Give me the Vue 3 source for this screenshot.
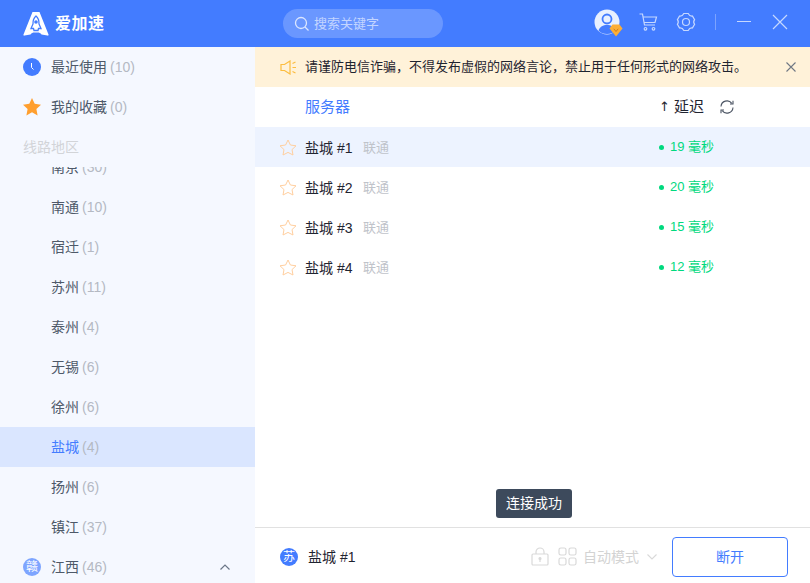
<script setup>
const cities = [
  { name: '南京', n: 30 }, { name: '南通', n: 10 }, { name: '宿迁', n: 1 }, { name: '苏州', n: 11 },
  { name: '泰州', n: 4 }, { name: '无锡', n: 6 }, { name: '徐州', n: 6 }, { name: '盐城', n: 4, on: true },
  { name: '扬州', n: 6 }, { name: '镇江', n: 37 }
]
const servers = [
  { id: 1, ms: 19, on: true }, { id: 2, ms: 20 }, { id: 3, ms: 15 }, { id: 4, ms: 12 }
]
</script>

<template>
  <div class="app">
    <header class="top">
      <div class="brand">
        <svg class="logo" width="26" height="25" viewBox="0 0 26 25">
          <path fill="#fff" d="M9.500 1H16.500L25.500 23.500C25.800 24.300 25.300 24.800 24.500 24.600L18.500 23.500C17.500 22 16 21.500 15 21.500H11C10 21.500 8.500 22 7.500 23.500L1.500 24.600C0.700 24.800 0.200 24.300 0.500 23.500Z"/>
          <path fill="none" stroke="#437cff" stroke-width="1.300" d="M13 5C15.300 7 16.200 10 16 13L18 17.500L15.500 17.500L15 19.500H11L10.500 17.500L8 17.500L10 13C9.800 10 10.700 7 13 5Z"/>
          <circle cx="13" cy="11" r="1.800" fill="#437cff"/>
        </svg>
        <span class="brand-name">爱加速</span>
      </div>
      <div class="search">
        <svg width="16" height="16" viewBox="0 0 16 16" fill="none" stroke="#dbe6ff" stroke-width="1.300">
          <circle cx="7" cy="7" r="5.500"/><path d="M11 11l3.500 3.500"/>
        </svg>
        <span>搜索关键字</span>
      </div>
      <div class="actions">
        <div class="avatar">
          <svg width="26" height="26" viewBox="0 0 26 26">
            <circle cx="13" cy="13" r="12.500" fill="#e8f0ff"/>
            <circle cx="13" cy="10" r="4.500" fill="#e8f0ff" stroke="#437cff" stroke-width="1.800"/>
            <path fill="#437cff" d="M4.500 21.500C6 17.500 9 16 13 16S20 17.500 21.500 21.500C19.500 24 16.500 25 13 25S6.500 24 4.500 21.500Z"/>
          </svg>
          <svg class="badge" width="14" height="13" viewBox="0 0 14 13">
            <path fill="#fcae37" d="M3.500 0.500H10.500L13.500 4.500L7 12.500L0.500 4.500Z"/>
            <path fill="none" stroke="#c9761a" stroke-width="0.900" d="M4.800 4.800L7 7.500L9.200 4.800"/>
          </svg>
        </div>
        <svg class="cart" width="20" height="20" viewBox="0 0 20 20" fill="none" stroke="#c6d8ff" stroke-width="1.200">
          <path d="M1.500 2H4.500L6.500 13H17"/><path d="M5 5H18.500L17 10.500H6"/>
          <circle cx="7.500" cy="16.800" r="1.300"/><circle cx="15.500" cy="16.800" r="1.300"/>
        </svg>
        <svg class="gear" width="20" height="20" viewBox="0 0 20 20" fill="none" stroke="#c6d8ff" stroke-width="1.200">
          <path d="M7.800 1.500H12.200C13 3.300 14.500 4.200 16.400 4L18.600 7.700C17.400 9.200 17.400 10.800 18.600 12.300L16.400 16C14.500 15.800 13 16.700 12.200 18.500H7.800C7 16.700 5.500 15.800 3.600 16L1.400 12.300C2.600 10.800 2.600 9.200 1.400 7.700L3.600 4C5.500 4.200 7 3.300 7.800 1.500Z"/>
          <circle cx="10" cy="10" r="3.500"/>
        </svg>
        <i class="divider"></i>
        <i class="minimize"></i>
        <svg class="close" width="16" height="16" viewBox="0 0 16 16" stroke="#c6d8ff" stroke-width="1.200">
          <path d="M1 1L15 15M15 1L1 15"/>
        </svg>
      </div>
    </header>

    <div class="body">
      <aside class="side">
        <div class="row">
          <svg class="ico" width="18" height="18" viewBox="0 0 18 18">
            <circle cx="9" cy="9" r="9" fill="#437cff"/>
            <path d="M8.500 5V9.500L10.500 11.500" stroke="#fff" stroke-width="1" fill="none"/>
          </svg>
          <span class="label">最近使用</span><span class="num">(10)</span>
        </div>
        <div class="row">
          <svg class="ico" width="18" height="18" viewBox="0 0 18 18">
            <path fill="#ff9f2f" d="M9 0L11.700 5.800L18 6.700L13.400 11L14.600 17.500L9 14.300L3.400 17.500L4.600 11L0 6.700L6.300 5.800Z"/>
          </svg>
          <span class="label">我的收藏</span><span class="num">(0)</span>
        </div>
        <div class="group">线路地区</div>
        <div class="scroll">
          <div class="list">
            <div v-for="c in cities" :key="c.name" class="row city" :class="{ on: c.on }">
              <span class="label">{{ c.name }}</span><span class="num">({{ c.n }})</span>
            </div>
            <div class="row">
              <span class="prov">赣</span>
              <span class="label">江西</span><span class="num">(46)</span>
              <svg class="up" width="10" height="6" viewBox="0 0 10 6" fill="none" stroke="#6b7688" stroke-width="1.200"><path d="M0.500 5.500L5 1L9.500 5.500"/></svg>
            </div>
          </div>
        </div>
      </aside>

      <main class="main">
        <div class="notice">
          <svg width="17" height="15" viewBox="0 0 17 15" fill="none" stroke="#fcbd3f" stroke-width="1.200">
            <path d="M1 4.500H4.500L10 1V14L4.500 10.500H1Z"/><path d="M12.500 3.500L15.500 2M12.500 7.500H16M12.500 11.500L15.500 13"/>
          </svg>
          <span class="notice-text">请谨防电信诈骗，不得发布虚假的网络言论，禁止用于任何形式的网络攻击。</span>
          <svg class="notice-x" width="10" height="10" viewBox="0 0 10 10" stroke="#6f7784" stroke-width="1.100"><path d="M0.500 0.500L9.500 9.500M9.500 0.500L0.500 9.500"/></svg>
        </div>
        <div class="thead">
          <span class="th-name">服务器</span>
          <span class="th-arrow">↑</span>
          <span class="th-delay">延迟</span>
          <svg width="16" height="16" viewBox="0 0 16 16" fill="none" stroke="#4a5362" stroke-width="1.100">
            <path d="M2 7.500A6 6 0 0 1 12.800 4.300"/><path d="M14 1.800V5H11"/>
            <path d="M14 8.500A6 6 0 0 1 3.200 11.700"/><path d="M2 14.200V11H5"/>
          </svg>
        </div>
        <div class="servers">
          <div v-for="s in servers" :key="s.id" class="server" :class="{ on: s.on }">
            <svg width="18" height="17" viewBox="0 0 18 17" fill="none" stroke="#ffcf9f" stroke-width="1">
              <path d="M9 1L11.400 6L17 6.800L13 10.600L14 16L9 13.400L4 16L5 10.600L1 6.800L6.600 6Z"/>
            </svg>
            <span class="s-name">盐城 #{{ s.id }}</span>
            <span class="s-isp">联通</span>
            <span class="dot"></span>
            <span class="s-ms">{{ s.ms }} 毫秒</span>
          </div>
        </div>
        <div class="toast-wrap"><div class="toast">连接成功</div></div>
        <footer class="foot">
          <span class="fico">苏</span>
          <span class="f-name">盐城 #1</span>
          <div class="f-right">
            <svg width="18" height="19" viewBox="0 0 18 19" fill="none" stroke="#d9d9d9" stroke-width="1.200">
              <rect x="1" y="7" width="16" height="11" rx="1"/><path d="M5 7V5A4 4 0 0 1 13 5V7"/>
              <circle cx="9" cy="11.500" r="1" fill="#d9d9d9"/><path d="M9 12V15"/>
            </svg>
            <svg class="grid" width="19" height="19" viewBox="0 0 19 19" fill="none" stroke="#d9d9d9" stroke-width="1.200">
              <rect x="1" y="1" width="7" height="7" rx="1.800"/><rect x="11" y="1" width="7" height="7" rx="1.800"/>
              <rect x="1" y="11" width="7" height="7" rx="1.800"/><rect x="11" y="11" width="7" height="7" rx="1.800"/>
            </svg>
            <span class="mode">自动模式</span>
            <svg class="chev" width="10" height="6" viewBox="0 0 10 6" fill="none" stroke="#d9d9d9" stroke-width="1.100"><path d="M0.500 0.500L5 5L9.500 0.500"/></svg>
            <button class="btn">断开</button>
          </div>
        </footer>
      </main>
    </div>
  </div>
</template>

<style scoped>
.app { width: 810px; height: 583px; overflow: hidden; display: flex; flex-direction: column; background: #fff; font-family: "Liberation Sans", "Noto Sans CJK SC", sans-serif; font-size: 14px; line-height: 20px; color: #1f2430; }
.top { height: 47px; flex: none; background: #437cff; display: flex; align-items: center; position: relative; }
.brand { width: 283px; flex: none; display: flex; align-items: center; padding-left: 23px; box-sizing: border-box; }
.brand-name { margin-left: 6px; color: #fff; font-size: 16px; font-weight: 700; letter-spacing: 0.500px; }
.search { width: 160px; height: 29px; border-radius: 15px; background: #6a97ff; display: flex; align-items: center; padding-left: 11px; box-sizing: border-box; color: #c3d5ff; font-size: 13px; gap: 4px; }
.actions { margin-left: auto; display: flex; align-items: center; padding-right: 22px; padding-bottom: 4px; }
.avatar { position: relative; width: 26px; height: 26px; }
.avatar svg { display: block; }
.badge { position: absolute; right: -3px; bottom: -2px; }
.cart { margin-left: 18px; }
.gear { margin-left: 18px; }
.divider { width: 1px; height: 16px; background: #7ca3ff; margin-left: 19px; }
.minimize { width: 14px; height: 1px; background: #c6d8ff; margin-left: 21px; }
.close { margin-left: 21px; }
.body { flex: 1; min-height: 0; display: flex; }
.side { width: 255px; flex: none; background: #f5f8ff; display: flex; flex-direction: column; overflow: hidden; }
.row { height: 40px; flex: none; display: flex; align-items: center; padding-left: 23px; color: #4e5969; position: relative; }
.ico { margin-right: 10px; }
.label { color: #4e5969; }
.num { color: #b4b9c3; margin-left: 3px; }
.group { height: 40px; flex: none; line-height: 40px; padding-left: 23px; box-sizing: border-box; color: #d2d4d8; }
.scroll { flex: 1; min-height: 0; overflow: hidden; }
.list { margin-top: -20px; }
.city { padding-left: 51px; }
.city.on { background: #dae6ff; }
.city.on .label { color: #437cff; }
.prov { width: 18px; height: 18px; border-radius: 50%; background: #7ea5ff; color: #fff; font-size: 12px; line-height: 18px; text-align: center; margin-right: 10px; }
.up { position: absolute; left: 220px; top: 17px; }
.main { flex: 1; min-width: 0; display: flex; flex-direction: column; }
.notice { height: 40px; flex: none; background: #fff2d9; display: flex; align-items: center; padding-left: 25px; }
.notice-text { margin-left: 8px; color: #1f2430; font-size: 13px; }
.notice-x { margin-left: auto; margin-right: 14px; }
.thead { height: 40px; flex: none; display: flex; align-items: center; }
.th-name { margin-left: 50px; color: #437cff; font-size: 15px; width: 354px; }
.th-arrow { width: 15px; font-family: "DejaVu Sans", sans-serif; font-size: 13px; color: #1f2430; }
.th-delay { font-size: 15px; color: #1f2430; margin-right: 15px; }
.server { height: 40px; display: flex; align-items: center; padding-left: 24px; }
.server.on { background: #edf3ff; }
.s-name { margin-left: 8px; width: 58px; padding-top: 2px; }
.s-isp { color: #bfc3ca; width: 296px; font-size: 13px; padding-top: 2px; }
.dot { width: 5px; height: 5px; border-radius: 50%; background: #00d97e; }
.s-ms { margin-left: 6px; color: #00d97e; font-size: 13px; }
.servers { flex: 1; min-height: 0; }
.toast-wrap { height: 0; position: relative; }
.toast { position: absolute; left: 241px; top: -38px; width: 76px; height: 29px; line-height: 29px; text-align: center; background: #3d4a5c; color: #fff; border-radius: 3px; }
.foot { height: 56px; box-sizing: border-box; flex: none; border-top: 1px solid #e1e1e1; display: flex; align-items: center; padding: 2px 0 0 25px; }
.fico { width: 18px; height: 18px; border-radius: 50%; background: #437cff; color: #fff; font-size: 12px; line-height: 18px; text-align: center; }
.f-name { margin-left: 10px; }
.f-right { margin-left: auto; display: flex; align-items: center; padding-right: 22px; }
.grid { margin-left: 9px; }
.mode { margin-left: 6px; color: #d3d3d3; }
.chev { margin-left: 8px; }
.btn { width: 116px; height: 40px; margin-left: 15px; background: #fff; border: 1px solid #437cff; border-radius: 4px; color: #437cff; font: inherit; padding: 0; }
</style>

<style>
html, body { margin: 0; padding: 0; overflow: hidden; }
</style>
